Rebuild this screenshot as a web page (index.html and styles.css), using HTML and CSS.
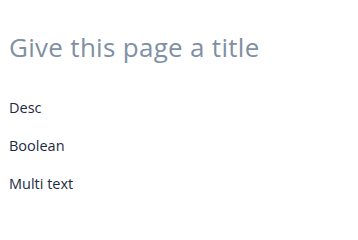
FILE: index.html
```html
<!DOCTYPE html>
<html>
<head>
<meta charset="utf-8">
<link rel="stylesheet" href="styles.css">
</head>
<body>
<div class="page">
  <h1 class="title">Give this page a title</h1>
  <div class="fields">
    <div class="field">Desc</div>
    <div class="field">Boolean</div>
    <div class="field">Multi text</div>
  </div>
</div>
</body>
</html>
```
FILE: styles.css
```css
html, body {
  margin: 0;
  padding: 0;
  background: #ffffff;
}
.page {
  padding: 30px 9px 0 9px;
  font-family: "Open Sans", "Noto Sans", sans-serif;
}
.title {
  margin: 0;
  font-weight: 400;
  font-size: 26px;
  line-height: 34px;
  color: #7f90a4;
  letter-spacing: 0.3px;
}
.fields {
  display: flex;
  flex-direction: column;
  gap: 18px;
  margin-top: 34px;
}
.field {
  font-size: 14.5px;
  line-height: 20px;
  color: #1c2a45;
}
```
